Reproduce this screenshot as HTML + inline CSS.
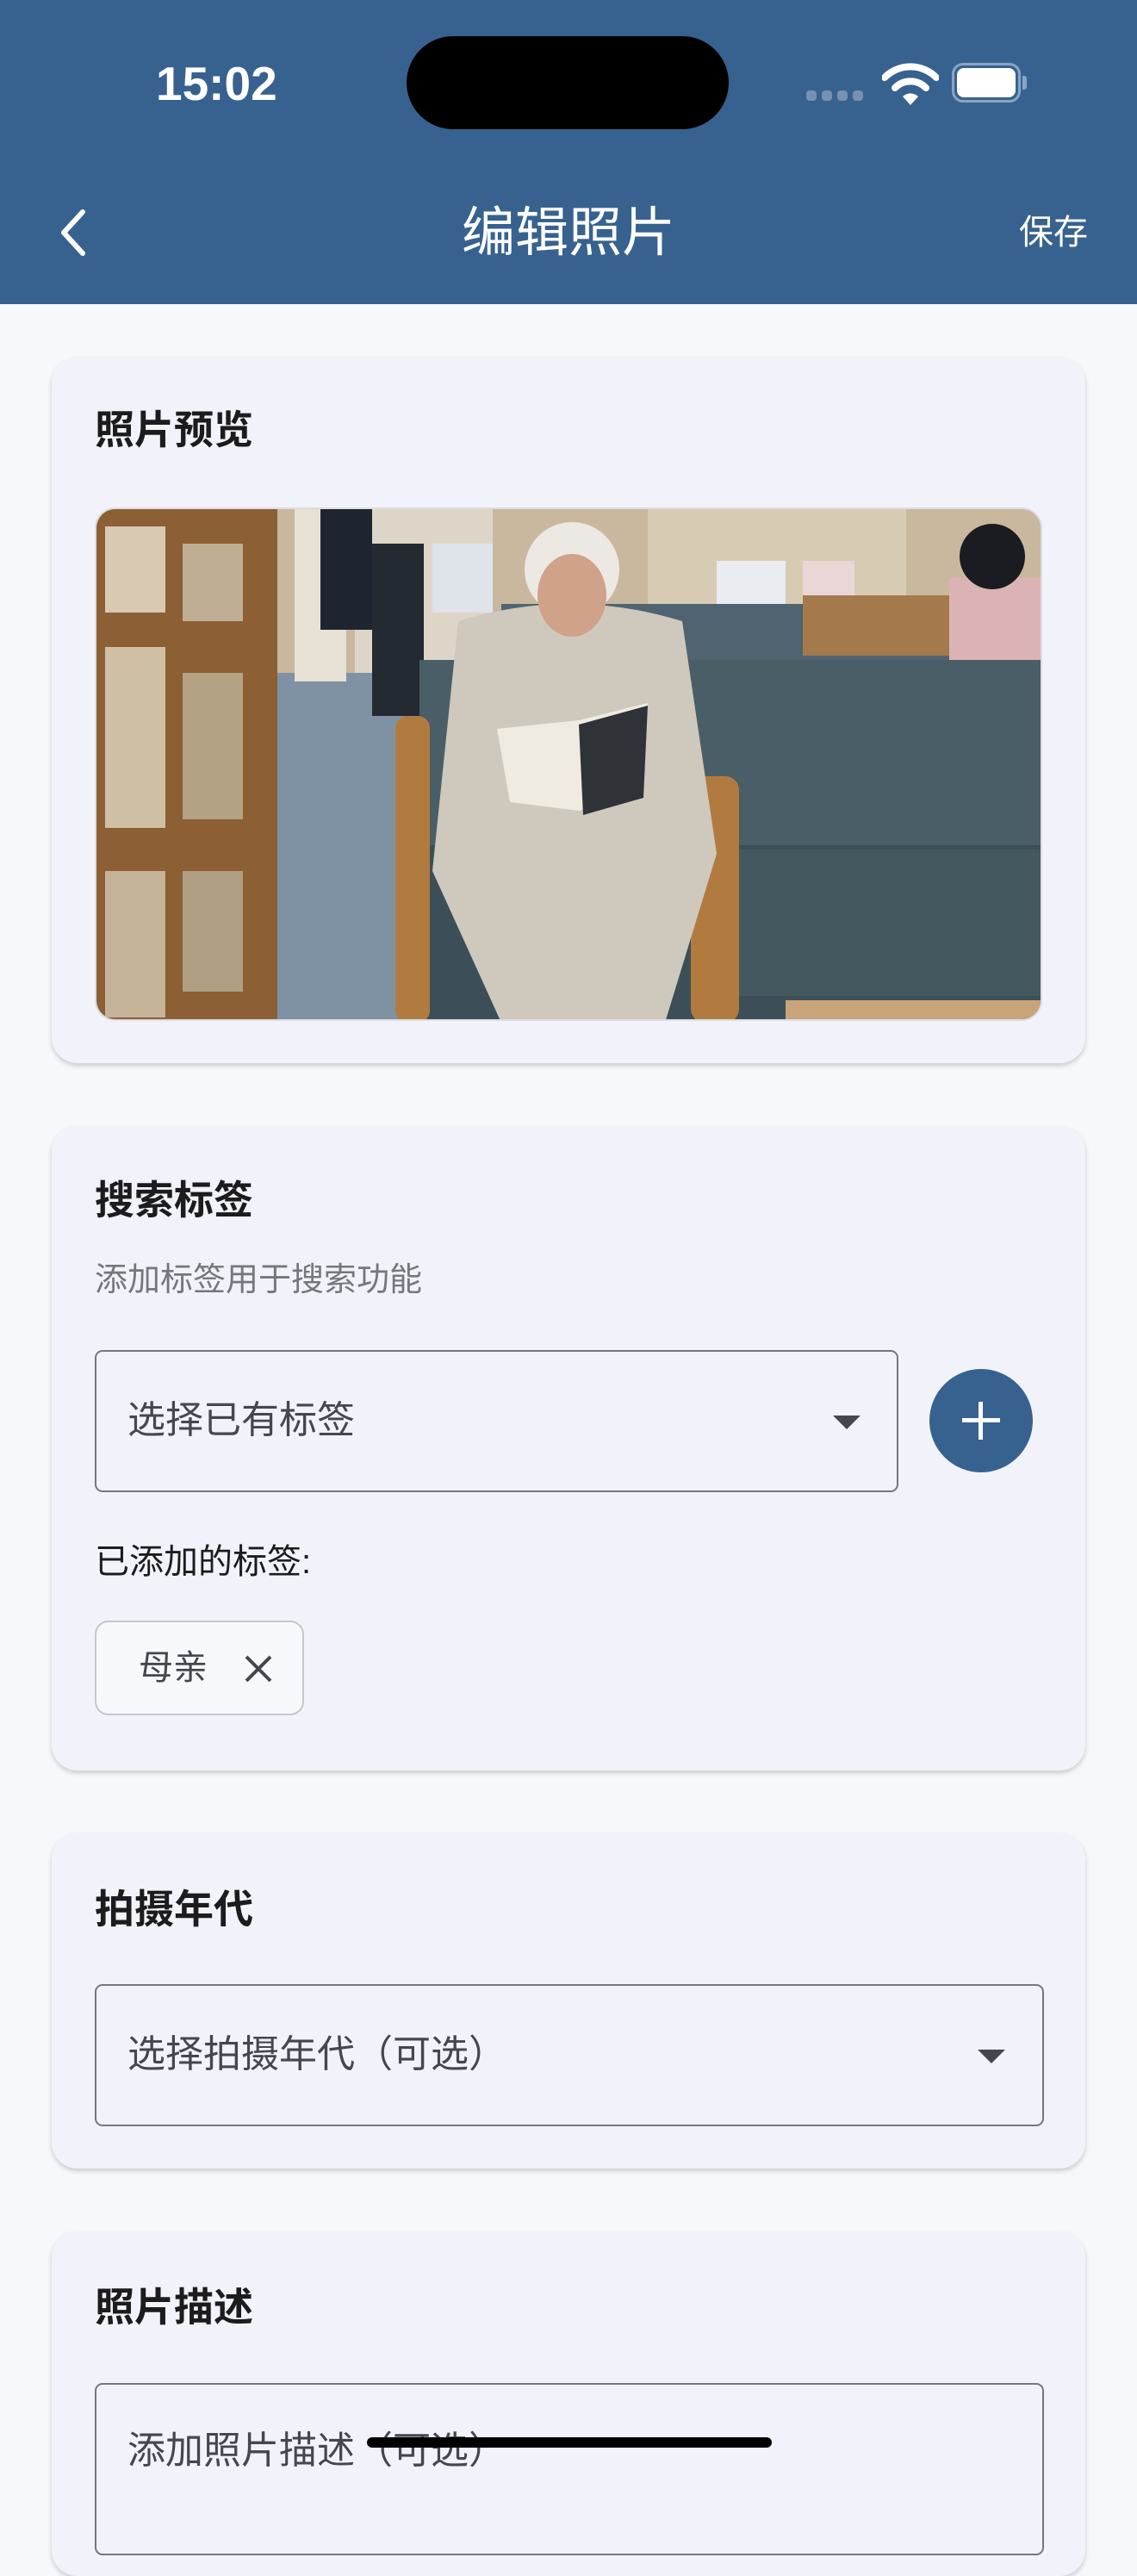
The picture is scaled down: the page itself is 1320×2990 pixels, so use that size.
<!DOCTYPE html>
<html><head><meta charset="utf-8"><style>
*{margin:0;padding:0;box-sizing:border-box}
body{width:1320px;height:2868px;background:#f7f8fc;font-family:"Liberation Sans","Noto Sans CJK SC",sans-serif;position:relative;overflow:hidden;color:#1c1c1f}
.abs{position:absolute}
.hdr{left:0;top:0;width:1320px;height:353px;background:#37628f}
.card{position:absolute;left:60px;width:1200px;background:#f2f3fa;border-radius:30px;box-shadow:0 3px 6px rgba(0,0,0,.18)}
.title{position:absolute;left:50px;font-size:46px;font-weight:bold;line-height:1}
.box{position:absolute;border:2.5px solid #74777f;border-radius:9px}
.ph{position:absolute;left:36px;font-size:44px;color:#44474e;line-height:1}
.arrow{position:absolute;width:0;height:0;border-left:16px solid transparent;border-right:16px solid transparent;border-top:16px solid #44474e}
</style></head><body>
<div class="abs hdr"></div>
<div class="abs" style="left:181px;top:70px;font-size:55px;font-weight:bold;color:#fff;line-height:1">15:02</div>
<div class="abs" style="left:472px;top:42px;width:374px;height:108px;border-radius:54px;background:#000"></div>
<div class="abs" style="left:936px;top:105px;width:68px;height:12px">
<div class="abs" style="left:0;top:0;width:12px;height:12px;border-radius:4px;background:#7791b2"></div>
<div class="abs" style="left:18px;top:0;width:12px;height:12px;border-radius:4px;background:#7791b2"></div>
<div class="abs" style="left:36px;top:0;width:12px;height:12px;border-radius:4px;background:#7791b2"></div>
<div class="abs" style="left:54px;top:0;width:12px;height:12px;border-radius:4px;background:#7791b2"></div>
</div>
<svg class="abs" style="left:1024px;top:72px" width="66" height="52" viewBox="0 0 66 52"><path d="M3 18 A42 42 0 0 1 63 18" stroke="#fff" stroke-width="8" fill="none" stroke-linecap="round"/><path d="M15 30 A25 25 0 0 1 51 30" stroke="#fff" stroke-width="8" fill="none" stroke-linecap="round"/><path d="M24 40 L33 50 L42 40 A13 13 0 0 0 24 40Z" fill="#fff"/></svg>
<div class="abs" style="left:1105px;top:73px;width:80px;height:46px;border:3px solid #8aa4c4;border-radius:13px"></div>
<div class="abs" style="left:1111px;top:79px;width:68px;height:34px;background:#fff;border-radius:8px"></div>
<div class="abs" style="left:1187px;top:88px;width:5px;height:16px;background:#8aa4c4;border-radius:0 3px 3px 0"></div>
<svg class="abs" style="left:64px;top:240px" width="40" height="60" viewBox="0 0 40 60"><path d="M32 6 L10 30 L32 54" stroke="#fff" stroke-width="6" fill="none" stroke-linecap="round" stroke-linejoin="round"/></svg>
<div class="abs" style="left:0;width:1320px;top:240px;text-align:center;font-size:62px;color:#fff;line-height:1">编辑照片</div>
<div class="abs" style="left:1183px;top:250px;font-size:40px;color:#fff;line-height:1">保存</div>

<div class="card" style="top:415px;height:819px">
<div class="title" style="top:61px">照片预览</div>
<div class="abs" style="left:50px;top:174px;width:1100px;height:596px;border-radius:24px;overflow:hidden;border:2px solid #dcdde3">
<svg width="1100" height="596" viewBox="0 0 1100 596">
<rect width="1100" height="596" fill="#b9a58a"/>
<rect x="200" y="0" width="900" height="200" fill="#c9b89e"/>
<rect x="300" y="0" width="160" height="200" fill="#ddd6c8"/>
<rect x="640" y="0" width="300" height="130" fill="#d8cbb4"/>
<rect x="200" y="190" width="200" height="406" fill="#7f92a3"/>
<rect x="230" y="0" width="60" height="200" fill="#e6e1d4"/>
<rect x="260" y="0" width="60" height="140" fill="#1f2530"/>
<rect x="320" y="40" width="60" height="200" fill="#232a32"/>
<rect x="390" y="40" width="70" height="80" fill="#dfe3ea"/>
<rect x="720" y="60" width="80" height="80" fill="#e9ecf0"/>
<rect x="820" y="60" width="60" height="80" fill="#e9d7d8"/>
<rect x="470" y="110" width="630" height="90" fill="#4f6470"/>
<rect x="820" y="100" width="180" height="70" fill="#a4794b"/>
<rect x="990" y="80" width="110" height="110" fill="#dcb3b4"/>
<circle cx="1040" cy="55" r="38" fill="#1b1c22"/>
<rect x="0" y="0" width="210" height="596" fill="#8c5f34"/>
<rect x="10" y="20" width="70" height="100" fill="#d7c9b2"/>
<rect x="10" y="160" width="70" height="210" fill="#cfc0a5"/>
<rect x="10" y="420" width="70" height="170" fill="#c5b39a"/>
<rect x="100" y="40" width="70" height="90" fill="#bfae94"/>
<rect x="100" y="190" width="70" height="170" fill="#b4a285"/>
<rect x="100" y="420" width="70" height="140" fill="#b09e83"/>
<rect x="375" y="175" width="725" height="225" fill="#4a5e67"/>
<rect x="375" y="390" width="725" height="206" fill="#3c4f58"/>
<rect x="700" y="395" width="400" height="170" fill="#44585f"/>
<rect x="347" y="240" width="40" height="356" rx="14" fill="#b17b40"/>
<rect x="690" y="310" width="56" height="286" rx="16" fill="#b17b40"/>
<path d="M420 130 Q550 90 680 130 L720 400 L660 596 L470 596 L390 420Z" fill="#cfc8bd"/>
<circle cx="552" cy="70" r="55" fill="#ece8e3"/>
<ellipse cx="552" cy="100" rx="40" ry="48" fill="#d0a28a"/>
<path d="M465 255 L560 245 L640 225 L635 330 L560 350 L480 340Z" fill="#f0ebe0"/>
<path d="M560 250 L640 228 L635 335 L565 355Z" fill="#2f3337"/>
<rect x="800" y="570" width="300" height="26" fill="#c9a37a"/>
</svg></div>
</div>

<div class="card" style="top:1307px;height:748px">
<div class="title" style="top:63px">搜索标签</div>
<div class="abs" style="left:50px;top:160px;font-size:38px;color:#76777c;line-height:1">添加标签用于搜索功能</div>
<div class="box" style="left:50px;top:260px;width:933px;height:165px"><div class="ph" style="top:58px">选择已有标签</div><div class="arrow" style="left:855px;top:74px"></div></div>
<div class="abs" style="left:1019px;top:282px;width:120px;height:120px;border-radius:60px;background:#37628f"></div>
<div class="abs" style="left:1057px;top:339px;width:44px;height:5px;background:#fff"></div>
<div class="abs" style="left:1076px;top:320px;width:5px;height:44px;background:#fff"></div>
<div class="abs" style="left:50px;top:486px;font-size:40px;line-height:1;color:#1c1c1f">已添加的标签:</div>
<div class="abs" style="left:50px;top:574px;width:243px;height:110px;border:2.5px solid #c4c6cf;border-radius:16px;background:#f7f8fc">
<div class="abs" style="left:49px;top:33px;font-size:40px;color:#44474e;line-height:1">母亲</div>
<svg class="abs" style="left:170px;top:36px" width="36" height="36" viewBox="0 0 36 36"><path d="M4 4L32 32M32 4L4 32" stroke="#44474e" stroke-width="4"/></svg>
</div>
</div>

<div class="card" style="top:2128px;height:389px">
<div class="title" style="top:65px">拍摄年代</div>
<div class="box" style="left:50px;top:175px;width:1102px;height:165px"><div class="ph" style="top:58px">选择拍摄年代（可选）</div><div class="arrow" style="left:1023px;top:74px"></div></div>
</div>

<div class="card" style="top:2590px;height:400px">
<div class="title" style="top:65px">照片描述</div>
<div class="box" style="left:50px;top:176px;width:1102px;height:200px"><div class="ph" style="top:55px">添加照片描述（可选）</div></div>
</div>
<div class="abs" style="left:426px;top:2829px;width:470px;height:12px;border-radius:6px;background:#000"></div>
</body></html>
